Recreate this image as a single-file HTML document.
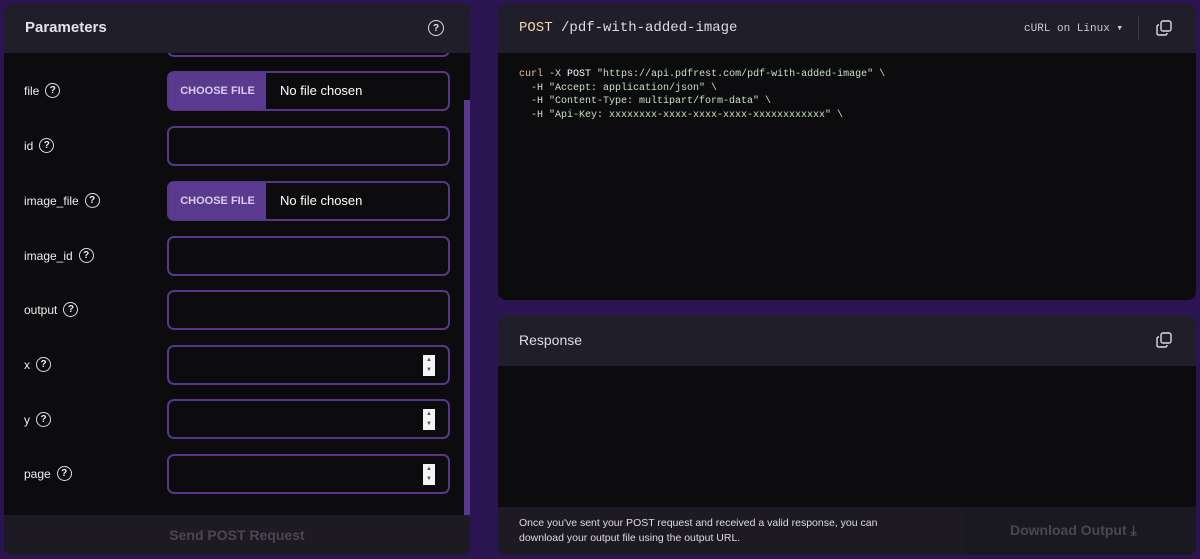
<!DOCTYPE html>
<html><head><style>
*{box-sizing:border-box;margin:0;padding:0}
body{width:1200px;height:559px;background:#2a1552;font-family:"Liberation Sans",sans-serif;position:relative;overflow:hidden;color:#e8e6ee}
.p{position:absolute;border-radius:8px;overflow:hidden;background:#0c0b0e}
.hd{position:absolute;left:0;right:0;top:0;height:50px;background:#211e2b;z-index:2}
.lbl{position:absolute;left:20px;font-size:12px;color:#eee;display:flex;align-items:center;gap:6px}
.q{width:15px;height:15px;border:1.5px solid #ddd;border-radius:50%;font-size:10px;display:inline-flex;align-items:center;justify-content:center;font-weight:bold}
.in{position:absolute;left:163px;width:283px;height:40px;border:2px solid #56378a;border-radius:7px;background:#0c0b0e}
.cf{position:absolute;left:0;top:0;bottom:0;width:97px;background:#5a3a8e;color:#d8cdee;font-size:11px;font-weight:bold;line-height:36px;text-align:center;white-space:nowrap}
.nf{position:absolute;left:111px;top:10px;font-size:13px;color:#fff}
.sp{position:absolute;right:13px;top:8px;width:12px;height:21px;background:#f4f4f4;font-size:6px;color:#555;text-align:center;line-height:10px}
.mono{font-family:"Liberation Mono",monospace}
</style></head><body>
<div class="p" style="left:4px;top:3px;width:466px;height:552px">
 <div class="hd"><div style="position:absolute;left:21px;top:16px;font-size:15px;font-weight:bold;color:#e4e2ea">Parameters</div>
 <div class="q" style="position:absolute;left:424px;top:17px;width:16px;height:16px">?</div></div>
 <div class="in" style="top:20px;height:34px"></div>
 <div style="position:absolute;left:460px;top:97px;width:6px;height:415px;background:#5a3a8e"></div>
 <div class="lbl" style="top:80px">file <span class="q">?</span></div>
 <div class="in" style="top:68px"><div class="cf">CHOOSE FILE</div><div class="nf">No file chosen</div></div>
 <div class="lbl" style="top:135px">id <span class="q">?</span></div>
 <div class="in" style="top:123px"></div>
 <div class="lbl" style="top:190px">image_file <span class="q">?</span></div>
 <div class="in" style="top:178px"><div class="cf">CHOOSE FILE</div><div class="nf">No file chosen</div></div>
 <div class="lbl" style="top:245px">image_id <span class="q">?</span></div>
 <div class="in" style="top:233px"></div>
 <div class="lbl" style="top:299px">output <span class="q">?</span></div>
 <div class="in" style="top:287px"></div>
 <div class="lbl" style="top:354px">x <span class="q">?</span></div>
 <div class="in" style="top:342px"><div class="sp">▲<br>▼</div></div>
 <div class="lbl" style="top:409px">y <span class="q">?</span></div>
 <div class="in" style="top:396px"><div class="sp">▲<br>▼</div></div>
 <div class="lbl" style="top:463px">page <span class="q">?</span></div>
 <div class="in" style="top:451px"><div class="sp">▲<br>▼</div></div>
 <div style="position:absolute;left:0;right:0;top:512px;height:40px;background:#1d1a24;color:#4a4652;font-size:14px;font-weight:bold;text-align:center;line-height:40px">Send POST Request</div>
</div>
<div class="p" style="left:498px;top:3px;width:698px;height:297px">
 <div class="hd"><div class="mono" style="position:absolute;left:21px;top:17px;font-size:14px"><span style="color:#f1d9a8">POST</span> <span style="color:#ddd">/pdf-with-added-image</span></div>
 <div class="mono" style="position:absolute;left:526px;top:18px;font-size:11px;color:#ccc">cURL on Linux ▾</div>
 <div style="position:absolute;left:640px;top:13px;width:1px;height:24px;background:#3a3644"></div>
 <svg style="position:absolute;left:658px;top:17px" width="16" height="16" viewBox="0 0 16 16" fill="none" stroke="#ddd" stroke-width="1.4"><rect x="5" y="1" width="10" height="10" rx="2"/><path d="M3 5H2.5A1.5 1.5 0 0 0 1 6.5v7A1.5 1.5 0 0 0 2.5 15h7A1.5 1.5 0 0 0 11 13.5V13"/></svg></div>
 <pre class="mono" style="position:absolute;left:21px;top:65px;font-size:10px;line-height:13.5px;color:#c8e0c0"><span style="color:#e8c88a">curl</span> -X <span style="color:#fff">POST</span> "https://api.pdfrest.com/pdf-with-added-image" \
  -H "Accept: application/json" \
  -H "Content-Type: multipart/form-data" \
  -H "Api-Key: xxxxxxxx-xxxx-xxxx-xxxx-xxxxxxxxxxxx" \</pre>
</div>
<div class="p" style="left:498px;top:316px;width:698px;height:239px">
 <div class="hd"><div style="position:absolute;left:21px;top:16px;font-size:14px;color:#ddd">Response</div>
 <svg style="position:absolute;left:658px;top:16px" width="16" height="16" viewBox="0 0 16 16" fill="none" stroke="#ddd" stroke-width="1.4"><rect x="5" y="1" width="10" height="10" rx="2"/><path d="M3 5H2.5A1.5 1.5 0 0 0 1 6.5v7A1.5 1.5 0 0 0 2.5 15h7A1.5 1.5 0 0 0 11 13.5V13"/></svg></div>
 <div style="position:absolute;left:0;right:0;top:191px;height:48px;background:#1d1a24">
  <div style="position:absolute;left:21px;top:9px;font-size:10.5px;line-height:15px;color:#ddd">Once you've sent your POST request and received a valid response, you can<br>download your output file using the output URL.</div>
  <div style="position:absolute;left:467px;top:0;width:231px;height:48px;background:#1a1820;color:#4a4652;font-size:14px;font-weight:bold;line-height:46px;padding-left:45px">Download Output ⤓</div>
 </div>
</div>
</body></html>
